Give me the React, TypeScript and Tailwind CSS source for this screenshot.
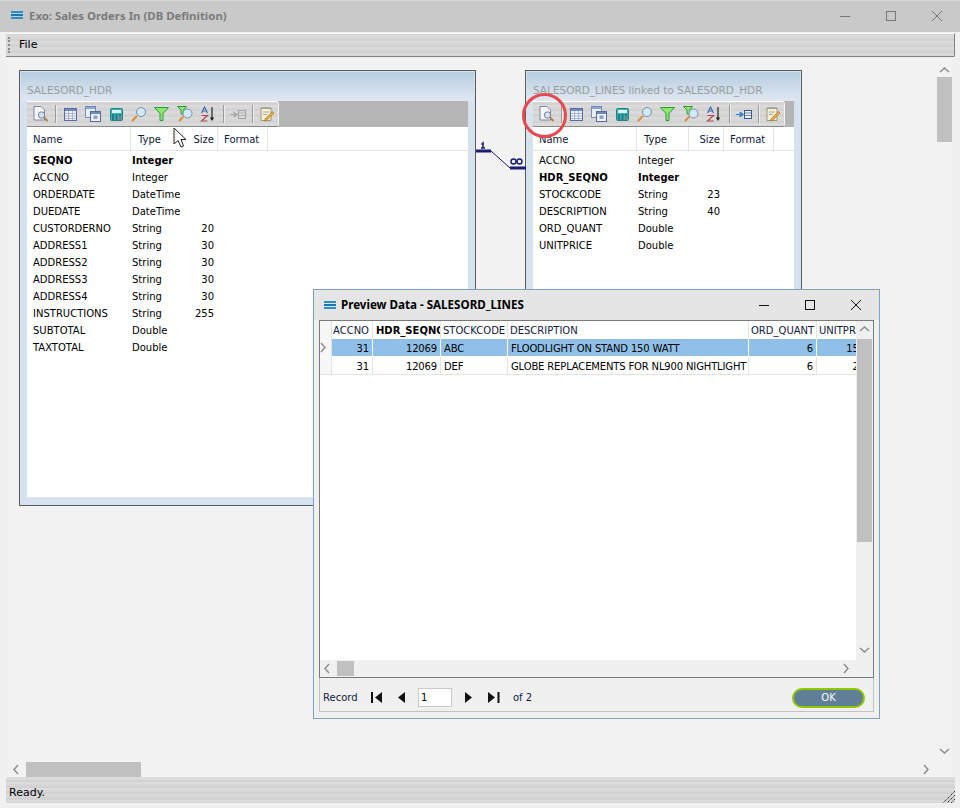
const hdrRows = [
  ["SEQNO", "Integer", "", true],
  ["ACCNO", "Integer", ""],
  ["ORDERDATE", "DateTime", ""],
  ["DUEDATE", "DateTime", ""],
  ["CUSTORDERNO", "String", "20"],
  ["ADDRESS1", "String", "30"],
  ["ADDRESS2", "String", "30"],
  ["ADDRESS3", "String", "30"],
  ["ADDRESS4", "String", "30"],
  ["INSTRUCTIONS", "String", "255"],
  ["SUBTOTAL", "Double", ""],
  ["TAXTOTAL", "Double", ""],
] as [string, string, string, boolean?][];

const lineRows = [
  ["ACCNO", "Integer", ""],
  ["HDR_SEQNO", "Integer", "", true],
  ["STOCKCODE", "String", "23"],
  ["DESCRIPTION", "String", "40"],
  ["ORD_QUANT", "Double", ""],
  ["UNITPRICE", "Double", ""],
] as [string, string, string, boolean?][];

const previewRows = [
  ["31", "12069", "ABC", "FLOODLIGHT ON STAND 150 WATT", "6", "150"],
  ["31", "12069", "DEF", "GLOBE REPLACEMENTS FOR NL900 NIGHTLIGHT", "6", "25"],
];

const texture =
  "bg-[repeating-linear-gradient(0deg,#d4d4d4_0px,#dedede_2px,#cfcfcf_4px,#d9d9d9_6px)]";

function AppIcon() {
  return (
    <svg width="12" height="9" viewBox="0 0 12 9" className="shrink-0">
      <rect y="0" width="12" height="2" fill="#2a8fd0" />
      <rect y="3" width="12" height="2" fill="#1a78b8" />
      <rect y="6" width="12" height="2" fill="#2a8fd0" />
    </svg>
  );
}

function WinButtons({ color }: { color: string }) {
  return (
    <div className="flex items-center gap-[36px]">
      <svg width="10" height="10" viewBox="0 0 10 10">
        <path d="M0 5.5H10" stroke={color} strokeWidth="1" />
      </svg>
      <svg width="10" height="10" viewBox="0 0 10 10">
        <rect x="0.5" y="0.5" width="9" height="9" fill="none" stroke={color} />
      </svg>
      <svg width="10" height="10" viewBox="0 0 10 10">
        <path d="M0 0L10 10M10 0L0 10" stroke={color} strokeWidth="1" />
      </svg>
    </div>
  );
}

function Chevron({ dir, className }: { dir: "up" | "down" | "left" | "right"; className?: string }) {
  const d = {
    up: "M1 6L5.5 2L10 6",
    down: "M1 2L5.5 6L10 2",
    left: "M6 1L2 5.5L6 10",
    right: "M2 1L6 5.5L2 10",
  }[dir];
  return (
    <svg width="11" height="11" viewBox="0 0 11 11" className={className}>
      <path d={d} fill="none" stroke="#8a8a8a" strokeWidth="1.4" />
    </svg>
  );
}

function PreviewIcon() {
  return (
    <svg width="16" height="16" viewBox="0 0 16 16">
      <path d="M1 0.5H8L11.5 4V14H1Z" fill="#f4f6fb" stroke="#7d86a8" />
      <circle cx="8.5" cy="9" r="3.2" fill="#cfe3f4" stroke="#7b7f88" />
      <path d="M11 11.5L14.5 15" stroke="#b08040" strokeWidth="2" />
    </svg>
  );
}

function TableIcon() {
  return (
    <svg width="13" height="13" viewBox="0 0 13 13">
      <rect x="0.5" y="0.5" width="12" height="12" fill="#eef2fa" stroke="#5a6aa4" />
      <rect x="1" y="1" width="11" height="2" fill="#7288c4" />
      <path d="M1 5.5H12M1 8H12M1 10.5H12M4.5 3V12M8.5 3V12" stroke="#9aa8d0" strokeWidth="0.8" />
    </svg>
  );
}

function FormsIcon() {
  return (
    <svg width="16" height="16" viewBox="0 0 16 16">
      <rect x="0.5" y="0.5" width="10" height="11" fill="#e8eef8" stroke="#7389b8" />
      <rect x="1" y="1" width="9" height="2" fill="#8aa4d4" />
      <rect x="5.5" y="5.5" width="10" height="10" fill="#eef3fb" stroke="#5a6aa4" />
      <rect x="6" y="6" width="9" height="2" fill="#7288c4" />
      <rect x="8.5" y="9.5" width="4" height="3.5" fill="#8aa0cc" />
    </svg>
  );
}

function CalcIcon() {
  return (
    <svg width="13" height="13" viewBox="0 0 13 13">
      <rect x="0.5" y="0.5" width="12" height="12" rx="1" fill="#35b4b4" stroke="#2a7f8c" />
      <rect x="2" y="2" width="9" height="3" fill="#dff3f4" />
      <path
        d="M2 7H4M5.5 7H7.5M9 7H11M2 9H4M5.5 9H7.5M2 11H4M5.5 11H7.5"
        stroke="#1c3f58"
        strokeWidth="1"
      />
      <path d="M9 9H11M9 11H11" stroke="#d83a3a" strokeWidth="1" />
    </svg>
  );
}

function MagIcon() {
  return (
    <svg width="16" height="16" viewBox="0 0 16 16">
      <path d="M1 15L6 10" stroke="#d88c3c" strokeWidth="2" />
      <circle cx="10" cy="6" r="4.5" fill="#cfe8fa" stroke="#7d8fa4" />
    </svg>
  );
}

function FilterIcon() {
  return (
    <svg width="15" height="14" viewBox="0 0 15 14">
      <path d="M0.5 0.5H14.5L9 6.5V13.5H6V6.5Z" fill="#8ee66c" stroke="#2c9a3c" />
    </svg>
  );
}

function FilterFindIcon() {
  return (
    <svg width="17" height="16" viewBox="0 0 17 16">
      <path d="M0.5 0.5H9.5L6.5 4V8H4V4Z" fill="#8ee66c" stroke="#2c9a3c" />
      <path d="M2 15L6.5 10.5" stroke="#d88c3c" strokeWidth="2" />
      <circle cx="10.5" cy="7.5" r="4.5" fill="#cfe8fa" stroke="#7d8fa4" />
    </svg>
  );
}

function SortIcon() {
  return (
    <svg width="15" height="16" viewBox="0 0 15 16">
      <path d="M1.5 7L4.5 1L7.5 7M2.8 5H6.2" fill="none" stroke="#3b63b4" strokeWidth="1.1" />
      <path d="M1.5 9.5H7.5L1.5 15H7.5" fill="none" stroke="#b04a4a" strokeWidth="1.2" />
      <path d="M12 1V14" stroke="#222" strokeWidth="1.2" />
      <path d="M9.8 11.5H14.2L12 15Z" fill="#222" />
    </svg>
  );
}

function MoveIcon({ off }: { off?: boolean }) {
  const a = off ? "#a9a9a9" : "#2f86d0";
  const b = off ? "#a3a3a3" : "#41578f";
  return (
    <svg width="16" height="11" viewBox="0 0 16 11">
      <path d="M0 5.5H4V3L7.5 5.5L4 8V5.5" fill={a} stroke={a} />
      <rect x="8.5" y="1.5" width="7" height="8" fill={off ? "#dcdcdc" : "#eef3fb"} stroke={b} />
      <path d="M9 4H15M9 6.5H15" stroke={b} strokeWidth="0.7" />
    </svg>
  );
}

function NoteIcon() {
  return (
    <svg width="14" height="16" viewBox="0 0 14 16">
      <path d="M1 2H11V14.5H1Z" fill="#f6efd8" stroke="#a09878" />
      <path d="M2 1.5V3M4 1.5V3M6 1.5V3M8 1.5V3M10 1.5V3" stroke="#7f7f7f" />
      <path d="M3 6H9M3 8.5H7" stroke="#a8a8a8" />
      <path d="M5 13L12.5 5.5L14 7L6.5 14.5L4.5 15Z" fill="#e8b048" stroke="#a47020" strokeWidth="0.7" />
    </svg>
  );
}

function Sep() {
  return <div className="w-px h-[18px] bg-[#9a9a9a] border-r border-[#eeeeee] box-content" />;
}

function Toolbar({ linked }: { linked?: boolean }) {
  return (
    <div
      className={`flex items-center w-[252px] h-[26px] pl-[6px] rounded-br-[3px] rounded-tr-[3px] border-t border-r border-b border-t-white border-r-[#f4f4f4] border-b-[#8a8a8a] ${texture}`}
    >
      <PreviewIcon />
      <div className="ml-[6px]">
        <Sep />
      </div>
      <div className="ml-[7px]">
        <TableIcon />
      </div>
      <div className="ml-[8px]">
        <FormsIcon />
      </div>
      <div className="ml-[9px]">
        <CalcIcon />
      </div>
      <div className="ml-[8px]">
        <MagIcon />
      </div>
      <div className="ml-[7px]">
        <FilterIcon />
      </div>
      <div className="ml-[8px]">
        <FilterFindIcon />
      </div>
      <div className="ml-[6px]">
        <SortIcon />
      </div>
      <div className="ml-[8px]">
        <Sep />
      </div>
      <div className="ml-[5px]">
        <MoveIcon off={!linked} />
      </div>
      <div className="ml-[6px]">
        <Sep />
      </div>
      <div className="ml-[6px]">
        <NoteIcon />
      </div>
    </div>
  );
}

function TablePanel({
  title,
  rows,
  linked,
  className,
}: {
  title: string;
  rows: [string, string, string, boolean?][];
  linked?: boolean;
  className: string;
}) {
  return (
    <div
      className={`absolute border border-[#5a5a5a] p-px bg-[#d6e3ee] flex flex-col ${className}`}
    >
      <div className="h-[29px] px-[6px] pt-[10px] bg-gradient-to-b from-[#b7cde0] to-[#dfe8f1] text-[10.5px] leading-[16px] text-[#9c9c9c] whitespace-nowrap">
        {title}
      </div>
      <div className="flex-1 mx-[6px] mb-[7px] flex flex-col bg-white min-h-0">
        <div className="h-[26px] bg-[#b5b5b5]">
          <Toolbar linked={linked} />
        </div>
        <div className="grid grid-cols-[104px_52px_35px_50px_1fr] h-[24px] border-b border-[#e4e4e4] text-[#10203c] leading-[25px]">
          <div className="pl-[6px] border-r border-[#e4e4e4]">Name</div>
          <div className="pl-[7px] border-r border-[#e4e4e4]">Type</div>
          <div className="pr-[3px] text-right border-r border-[#e4e4e4]">Size</div>
          <div className="pl-[6px] border-r border-[#e4e4e4]">Format</div>
          <div />
        </div>
        <div className="pt-px">
          {rows.map(([name, type, size, bold]) => (
            <div
              key={name}
              className={`grid grid-cols-[104px_52px_31px] h-[17px] leading-[17px] text-black ${bold ? "font-bold" : ""}`}
            >
              <div className="pl-[6px]">{name}</div>
              <div className="pl-px">{type}</div>
              <div className="text-right">{size}</div>
            </div>
          ))}
        </div>
      </div>
    </div>
  );
}

function PreviewDialog() {
  const cols = "grid grid-cols-[12px_41px_68px_67px_241px_68px_52px]";
  return (
    <div className="absolute left-[305px] top-[230px] w-[567px] h-[430px] border border-[#7f9fcb] bg-[#f0f0f0] flex flex-col">
      <div className="h-[30px] shrink-0 bg-[#e5e5e5] flex items-center pl-[10px] pr-[18px]">
        <AppIcon />
        <span className="ml-[5px] font-bold text-[11.6px] font-['Noto_Sans',sans-serif] text-black">Preview Data - SALESORD_LINES</span>
        <div className="ml-auto">
          <WinButtons color="#111111" />
        </div>
      </div>
      <div className="mx-[5px] h-[358px] border-x border-t border-b border-[#7a7a7a] bg-white flex flex-col shrink-0">
        <div className="flex flex-1 min-h-0">
          <div className="w-[537px] overflow-hidden">
            <div className={`${cols} h-[18px] leading-[19px] bg-white text-[#10203c] whitespace-nowrap`}>
              <div className="bg-[#f7f7f7] border-r border-[#e4e4e4]" />
              <div className="pl-px border-r border-[#e4e4e4] overflow-hidden">ACCNO</div>
              <div className="pl-[3px] font-bold text-black border-r border-[#e4e4e4] overflow-hidden">HDR_SEQNO</div>
              <div className="pl-[2px] border-r border-[#e4e4e4] overflow-hidden">STOCKCODE</div>
              <div className="pl-[2px] border-r border-[#e4e4e4] overflow-hidden">DESCRIPTION</div>
              <div className="pl-[2px] border-r border-[#e4e4e4] overflow-hidden">ORD_QUANT</div>
              <div className="pl-[2px] overflow-hidden">UNITPRICE</div>
            </div>
            {previewRows.map((r, i) => (
              <div
                key={r[2]}
                className={`${cols} h-[18px] leading-[19px] tracking-[-0.15px] whitespace-nowrap border-b ${i === 0 ? "border-white" : "border-[#e4e4e4]"} text-black`}
              >
                <div className="bg-[#f7f7f7] border-r border-[#e4e4e4] flex items-center">
                  {i === 0 && <Chevron dir="right" className="-ml-[1px]" />}
                </div>
                {r.map((v, j) => (
                  <div
                    key={j}
                    className={`border-r overflow-hidden ${i === 0 ? "bg-[#90c0e8] border-white" : "border-[#e4e4e4]"} ${j === 0 || j === 1 || j === 4 || j === 5 ? "text-right pr-[3px]" : "pl-[3px]"}`}
                  >
                    {v}
                  </div>
                ))}
              </div>
            ))}
          </div>
          <div className="w-[17px] bg-[#f0f0f0] flex flex-col items-center">
            <div className="h-[18px] flex items-center">
              <Chevron dir="up" />
            </div>
            <div className="w-[15px] h-[203px] bg-[#c0c0c0]" />
            <div className="mt-auto mb-[3px]">
              <Chevron dir="down" />
            </div>
          </div>
        </div>
        <div className="h-[17px] shrink-0 bg-[#f0f0f0] flex items-center">
          <Chevron dir="left" className="ml-[3px]" />
          <div className="w-[17px] h-[15px] ml-[3px] bg-[#c0c0c0]" />
          <Chevron dir="right" className="ml-auto mr-[20px]" />
        </div>
      </div>
      <div className="mx-[5px] h-[34px] pt-[6px] border-x border-b border-[#c2c2c2] flex items-center pl-[3px] text-[#10203c] shrink-0">
        <span className="w-[35px]">Record</span>
        <svg width="12" height="11" viewBox="0 0 12 11" className="ml-[13px]">
          <path d="M1 0V11" stroke="#111" strokeWidth="2" />
          <path d="M11 0V11L4 5.5Z" fill="#111" />
        </svg>
        <svg width="7" height="11" viewBox="0 0 7 11" className="ml-[15px]">
          <path d="M7 0V11L0 5.5Z" fill="#111" />
        </svg>
        <input
          readOnly
          value="1"
          className="ml-[13px] w-[34px] h-[19px] border border-[#c8c8c8] bg-white px-[2px] text-black outline-none"
        />
        <svg width="7" height="11" viewBox="0 0 7 11" className="ml-[13px]">
          <path d="M0 0V11L7 5.5Z" fill="#111" />
        </svg>
        <svg width="12" height="11" viewBox="0 0 12 11" className="ml-[16px]">
          <path d="M0 0V11L7 5.5Z" fill="#111" />
          <path d="M10.5 0V11" stroke="#111" strokeWidth="2" />
        </svg>
        <span className="ml-[13px]">of 2</span>
        <button className="ml-auto mr-[8px] w-[73px] h-[20px] rounded-full border-2 border-[#8fc800] bg-[#5f7f96] text-white leading-none">
          OK
        </button>
      </div>
    </div>
  );
}

export default function App() {
  return (
    <div className="w-[960px] h-[808px] bg-[#f0f0f0] flex flex-col overflow-hidden text-[10px] font-['DejaVu_Sans','Liberation_Sans',sans-serif]">
      <div className="h-[32px] shrink-0 bg-[#c9c9c9] border-t border-[#d8d8d8] pb-[2px] flex items-center pl-[11px] pr-[18px]">
        <AppIcon />
        <span className="ml-[6px] font-bold text-[11.4px] font-['Noto_Sans',sans-serif] text-[#7b7b7b]">Exo: Sales Orders In (DB Definition)</span>
        <div className="ml-auto">
          <WinButtons color="#777777" />
        </div>
      </div>
      <div className="flex-1 flex flex-col pl-[6px] pr-[5px] pb-[5px] min-h-0">
        <div
          className={`h-[24px] shrink-0 mt-px flex items-center border-t border-b border-r border-t-white border-b-[#808080] border-r-[#808080] rounded-br-[2px] ${texture}`}
        >
          <div className="ml-[2px] w-[2px] h-[16px] border-l-2 border-dotted border-[#8a8a8a]" />
          <span className="ml-[9px] pt-px text-[11px] text-black">File</span>
        </div>
        <div className="flex-1 min-h-0 mt-[2px] ml-[2px] mr-[3px] bg-[#f2f2f2] flex flex-col">
          <div className="flex-1 min-h-0 flex">
            <div className="relative flex-1 min-w-0">
              <TablePanel title="SALESORD_HDR" rows={hdrRows} className="left-[11px] top-[11px] w-[457px] h-[436px]" />
              <TablePanel
                title="SALESORD_LINES linked to SALESORD_HDR"
                rows={lineRows}
                linked
                className="left-[517px] top-[11px] w-[277px] h-[436px]"
              />
              <svg width="50" height="34" viewBox="0 0 50 34" className="absolute left-[468px] top-[81px]">
                <path d="M0 11H15M34 28H50" stroke="#1a1a78" strokeWidth="3" />
                <path d="M15 11L34 28" stroke="#1a1a78" strokeWidth="1" />
                <path d="M7 8V3L5.5 4.5M5 8H9" fill="none" stroke="#1a1a78" strokeWidth="1.5" />
                <circle cx="37.5" cy="21.5" r="2.5" fill="none" stroke="#1a1a78" strokeWidth="1.4" />
                <circle cx="43.5" cy="21.5" r="2.5" fill="none" stroke="#1a1a78" strokeWidth="1.4" />
              </svg>
              <PreviewDialog />
              <svg width="16" height="24" viewBox="0 0 16 24" className="absolute left-[165px] top-[68px]">
                <path d="M1 1V17L5 13.5L8 20L10.5 19L8 12.5L13 12.5Z" fill="#fff" stroke="#222" strokeWidth="1" />
              </svg>
              <div className="absolute left-[514px] top-[34px] w-[45px] h-[45px] rounded-full border-[3px] border-[#e8484e]" />
            </div>
            <div className="w-[16px] shrink-0 flex flex-col items-center">
              <div className="h-[18px] flex items-end">
                <Chevron dir="up" />
              </div>
              <div className="w-[15px] h-[65px] bg-[#c0c0c0]" />
              <div className="mt-auto mb-[3px]">
                <Chevron dir="down" />
              </div>
            </div>
          </div>
          <div className="h-[16px] shrink-0 flex items-center">
            <Chevron dir="left" className="ml-[4px]" />
            <div className="ml-[3px] w-[115px] h-[15px] bg-[#c0c0c0]" />
            <Chevron dir="right" className="ml-auto mr-[19px]" />
          </div>
        </div>
        <div className="h-[3px] shrink-0 bg-[#dcdcdc]" />
        <div
          className={`h-[23px] shrink-0 relative flex items-center pl-[3px] pt-[3px] text-[11px] text-black ${texture}`}
        >
          Ready.
          <svg width="13" height="13" viewBox="0 0 13 13" className="absolute right-0 bottom-0">
            <path d="M13 1L1 13M13 5L5 13M13 9L9 13" stroke="#333" strokeWidth="1" strokeDasharray="1.5 0.6" />
          </svg>
        </div>
      </div>
    </div>
  );
}
